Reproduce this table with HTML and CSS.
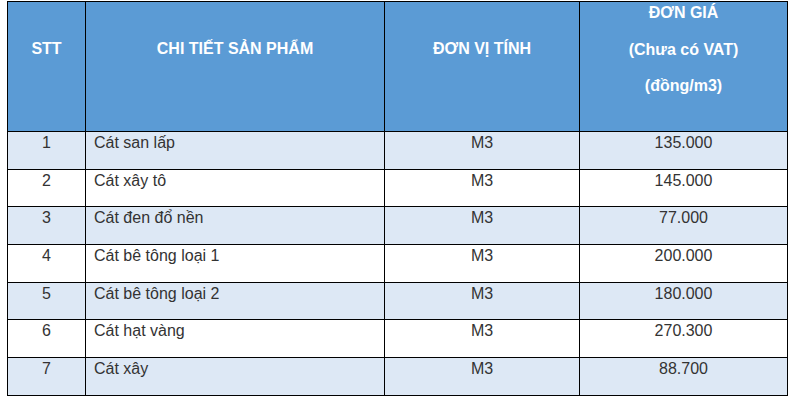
FILE: index.html
```html
<!DOCTYPE html>
<html lang="vi">
<head>
<meta charset="utf-8">
<link rel="stylesheet" href="styles.css">
</head>
<body>
<table class="price">
  <colgroup>
    <col class="c1"><col class="c2"><col class="c3"><col class="c4">
  </colgroup>
  <thead>
    <tr class="head">
      <th class="single">STT</th>
      <th class="single">CHI TIẾT SẢN PHẨM</th>
      <th class="single">ĐƠN VỊ TÍNH</th>
      <th class="multi"><p>ĐƠN GIÁ</p><p>(Chưa có VAT)</p><p>(đồng/m3)</p></th>
    </tr>
  </thead>
  <tbody>
    <tr><td class="num">1</td><td class="name">Cát san lấp</td><td class="num">M3</td><td class="num">135.000</td></tr>
    <tr><td class="num">2</td><td class="name">Cát xây tô</td><td class="num">M3</td><td class="num">145.000</td></tr>
    <tr><td class="num">3</td><td class="name">Cát đen đổ nền</td><td class="num">M3</td><td class="num">77.000</td></tr>
    <tr><td class="num">4</td><td class="name">Cát bê tông loại 1</td><td class="num">M3</td><td class="num">200.000</td></tr>
    <tr><td class="num">5</td><td class="name">Cát bê tông loại 2</td><td class="num">M3</td><td class="num">180.000</td></tr>
    <tr><td class="num">6</td><td class="name">Cát hạt vàng</td><td class="num">M3</td><td class="num">270.300</td></tr>
    <tr><td class="num">7</td><td class="name">Cát xây</td><td class="num">M3</td><td class="num">88.700</td></tr>
  </tbody>
</table>
</body>
</html>
```
FILE: styles.css
```css
html, body {
  margin: 0;
  padding: 0;
  background: #ffffff;
}
body {
  font-family: "Liberation Sans", Arial, sans-serif;
  font-size: 16px;
}
.price {
  margin: 1px 0 0 7px;
  border-collapse: collapse;
  table-layout: fixed;
  width: 780px;
}
.c1 { width: 78px; }
.c2 { width: 299px; }
.c3 { width: 195px; }
.c4 { width: 208px; }
.price th, .price td {
  border: 1px solid #000;
  vertical-align: top;
  line-height: 18px;
}
.head { height: 130px; }
.price th {
  background: #5b9bd5;
  color: #ffffff;
  font-weight: bold;
  text-align: center;
  padding: 0 4px;
}
.price th.single { padding-top: 38px; }
.price th.multi { padding-top: 2px; }
.price th p {
  margin: 0 0 18.5px 0;
}
.price tbody tr { height: 37.7px; }
.price tbody tr:nth-child(odd) td { background: #dde8f5; }
.price tbody tr:nth-child(even) td { background: #ffffff; }
.price td {
  color: #333333;
  padding: 2px 8px 0 8px;
}
.price td.num { text-align: center; }
.price td.name { text-align: left; }
```
